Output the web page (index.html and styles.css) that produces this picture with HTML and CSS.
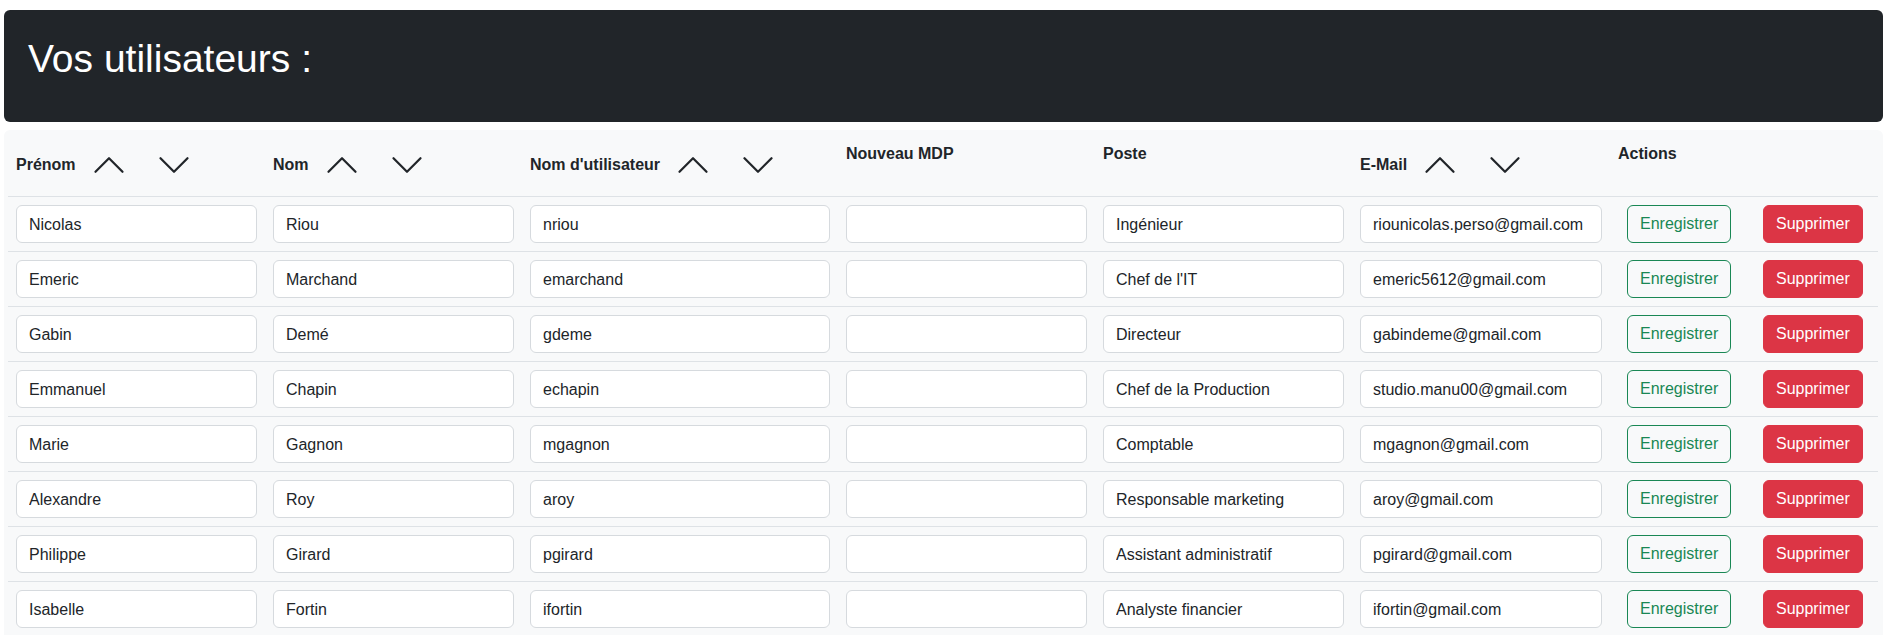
FILE: index.html
```html
<!DOCTYPE html>
<html lang="fr">
<head>
<meta charset="utf-8">
<title>Vos utilisateurs</title>
<link rel="stylesheet" href="styles.css">
</head>
<body>
<div class="page">
  <header class="banner">
    <h1 class="banner-title">Vos utilisateurs :</h1>
  </header>

  <div class="panel">
    <table class="users">
      <colgroup>
        <col class="c-first"><col class="c-last"><col class="c-user"><col class="c-pass"><col class="c-job"><col class="c-mail"><col class="c-save"><col class="c-del">
      </colgroup>
      <thead>
        <tr>
          <th><div class="sort"><span class="label">Prénom</span><button class="sort-btn" type="button"><svg viewBox="0 0 16 16" class="chev"><path d="M7.646 4.646a.5.5 0 0 1 .708 0l6 6a.5.5 0 0 1-.708.708L8 5.707l-5.646 5.647a.5.5 0 0 1-.708-.708l6-6z"/></svg></button><button class="sort-btn" type="button"><svg viewBox="0 0 16 16" class="chev"><path d="M1.646 4.646a.5.5 0 0 1 .708 0L8 10.293l5.646-5.647a.5.5 0 0 1 .708.708l-6 6a.5.5 0 0 1-.708 0l-6-6a.5.5 0 0 1 0-.708z"/></svg></button></div></th>
          <th><div class="sort"><span class="label">Nom</span><button class="sort-btn" type="button"><svg viewBox="0 0 16 16" class="chev"><path d="M7.646 4.646a.5.5 0 0 1 .708 0l6 6a.5.5 0 0 1-.708.708L8 5.707l-5.646 5.647a.5.5 0 0 1-.708-.708l6-6z"/></svg></button><button class="sort-btn" type="button"><svg viewBox="0 0 16 16" class="chev"><path d="M1.646 4.646a.5.5 0 0 1 .708 0L8 10.293l5.646-5.647a.5.5 0 0 1 .708.708l-6 6a.5.5 0 0 1-.708 0l-6-6a.5.5 0 0 1 0-.708z"/></svg></button></div></th>
          <th><div class="sort"><span class="label">Nom d'utilisateur</span><button class="sort-btn" type="button"><svg viewBox="0 0 16 16" class="chev"><path d="M7.646 4.646a.5.5 0 0 1 .708 0l6 6a.5.5 0 0 1-.708.708L8 5.707l-5.646 5.647a.5.5 0 0 1-.708-.708l6-6z"/></svg></button><button class="sort-btn" type="button"><svg viewBox="0 0 16 16" class="chev"><path d="M1.646 4.646a.5.5 0 0 1 .708 0L8 10.293l5.646-5.647a.5.5 0 0 1 .708.708l-6 6a.5.5 0 0 1-.708 0l-6-6a.5.5 0 0 1 0-.708z"/></svg></button></div></th>
          <th>Nouveau MDP</th>
          <th>Poste</th>
          <th><div class="sort"><span class="label">E-Mail</span><button class="sort-btn" type="button"><svg viewBox="0 0 16 16" class="chev"><path d="M7.646 4.646a.5.5 0 0 1 .708 0l6 6a.5.5 0 0 1-.708.708L8 5.707l-5.646 5.647a.5.5 0 0 1-.708-.708l6-6z"/></svg></button><button class="sort-btn" type="button"><svg viewBox="0 0 16 16" class="chev"><path d="M1.646 4.646a.5.5 0 0 1 .708 0L8 10.293l5.646-5.647a.5.5 0 0 1 .708.708l-6 6a.5.5 0 0 1-.708 0l-6-6a.5.5 0 0 1 0-.708z"/></svg></button></div></th>
          <th colspan="2">Actions</th>
        </tr>
      </thead>
      <tbody>
        <tr>
          <td><input class="field" type="text" value="Nicolas"></td>
          <td><input class="field" type="text" value="Riou"></td>
          <td><input class="field" type="text" value="nriou"></td>
          <td><input class="field" type="password" value=""></td>
          <td><input class="field" type="text" value="Ingénieur"></td>
          <td><input class="field" type="text" value="riounicolas.perso@gmail.com"></td>
          <td><button class="btn btn-save" type="button">Enregistrer</button></td>
          <td><button class="btn btn-del" type="button">Supprimer</button></td>
        </tr>
        <tr>
          <td><input class="field" type="text" value="Emeric"></td>
          <td><input class="field" type="text" value="Marchand"></td>
          <td><input class="field" type="text" value="emarchand"></td>
          <td><input class="field" type="password" value=""></td>
          <td><input class="field" type="text" value="Chef de l'IT"></td>
          <td><input class="field" type="text" value="emeric5612@gmail.com"></td>
          <td><button class="btn btn-save" type="button">Enregistrer</button></td>
          <td><button class="btn btn-del" type="button">Supprimer</button></td>
        </tr>
        <tr>
          <td><input class="field" type="text" value="Gabin"></td>
          <td><input class="field" type="text" value="Demé"></td>
          <td><input class="field" type="text" value="gdeme"></td>
          <td><input class="field" type="password" value=""></td>
          <td><input class="field" type="text" value="Directeur"></td>
          <td><input class="field" type="text" value="gabindeme@gmail.com"></td>
          <td><button class="btn btn-save" type="button">Enregistrer</button></td>
          <td><button class="btn btn-del" type="button">Supprimer</button></td>
        </tr>
        <tr>
          <td><input class="field" type="text" value="Emmanuel"></td>
          <td><input class="field" type="text" value="Chapin"></td>
          <td><input class="field" type="text" value="echapin"></td>
          <td><input class="field" type="password" value=""></td>
          <td><input class="field" type="text" value="Chef de la Production"></td>
          <td><input class="field" type="text" value="studio.manu00@gmail.com"></td>
          <td><button class="btn btn-save" type="button">Enregistrer</button></td>
          <td><button class="btn btn-del" type="button">Supprimer</button></td>
        </tr>
        <tr>
          <td><input class="field" type="text" value="Marie"></td>
          <td><input class="field" type="text" value="Gagnon"></td>
          <td><input class="field" type="text" value="mgagnon"></td>
          <td><input class="field" type="password" value=""></td>
          <td><input class="field" type="text" value="Comptable"></td>
          <td><input class="field" type="text" value="mgagnon@gmail.com"></td>
          <td><button class="btn btn-save" type="button">Enregistrer</button></td>
          <td><button class="btn btn-del" type="button">Supprimer</button></td>
        </tr>
        <tr>
          <td><input class="field" type="text" value="Alexandre"></td>
          <td><input class="field" type="text" value="Roy"></td>
          <td><input class="field" type="text" value="aroy"></td>
          <td><input class="field" type="password" value=""></td>
          <td><input class="field" type="text" value="Responsable marketing"></td>
          <td><input class="field" type="text" value="aroy@gmail.com"></td>
          <td><button class="btn btn-save" type="button">Enregistrer</button></td>
          <td><button class="btn btn-del" type="button">Supprimer</button></td>
        </tr>
        <tr>
          <td><input class="field" type="text" value="Philippe"></td>
          <td><input class="field" type="text" value="Girard"></td>
          <td><input class="field" type="text" value="pgirard"></td>
          <td><input class="field" type="password" value=""></td>
          <td><input class="field" type="text" value="Assistant administratif"></td>
          <td><input class="field" type="text" value="pgirard@gmail.com"></td>
          <td><button class="btn btn-save" type="button">Enregistrer</button></td>
          <td><button class="btn btn-del" type="button">Supprimer</button></td>
        </tr>
        <tr>
          <td><input class="field" type="text" value="Isabelle"></td>
          <td><input class="field" type="text" value="Fortin"></td>
          <td><input class="field" type="text" value="ifortin"></td>
          <td><input class="field" type="password" value=""></td>
          <td><input class="field" type="text" value="Analyste financier"></td>
          <td><input class="field" type="text" value="ifortin@gmail.com"></td>
          <td><button class="btn btn-save" type="button">Enregistrer</button></td>
          <td><button class="btn btn-del" type="button">Supprimer</button></td>
        </tr>
      </tbody>
    </table>
  </div>
</div>
</body>
</html>
```

FILE: styles.css
```css
html {
  overflow: hidden;
}

body {
  margin: 0;
  background: #ffffff;
  color: #212529;
  font-family: "Liberation Sans", Arial, sans-serif;
  font-size: 16px;
  line-height: 24px;
}

.page {
  padding: 10px 7px 0 4px;
}

.banner {
  background: #212529;
  border-radius: 6px;
  height: 112px;
  padding: 0 24px;
  box-sizing: border-box;
}

.banner-title {
  margin: 0;
  padding-top: 25px;
  color: #ffffff;
  font-size: 39px;
  line-height: 48px;
  font-weight: 400;
}

.panel {
  margin-top: 8px;
  background: #f8f9fa;
  border-radius: 6px;
  padding: 4px;
}

.users {
  width: 1870px;
  table-layout: fixed;
  border-collapse: collapse;
}

.c-first { width: 257px; }
.c-last { width: 257px; }
.c-user { width: 316px; }
.c-pass { width: 257px; }
.c-job { width: 257px; }
.c-mail { width: 258px; }
.c-save { width: 136px; }
.c-del { width: 132px; }

.users th,
.users td {
  padding: 8px;
  border-bottom: 1px solid #dee2e6;
  text-align: left;
}

.users th {
  vertical-align: top;
  font-weight: 700;
  white-space: nowrap;
}

.users td {
  vertical-align: middle;
}

.sort {
  display: flex;
  align-items: center;
}

.label {
  display: block;
}

.sort-btn {
  display: block;
  margin: 0 0 0 1px;
  padding: 5px 14px;
  border: 0;
  background: transparent;
  color: #212529;
}

.chev {
  display: block;
  width: 36px;
  height: 36px;
  fill: currentColor;
}

.field {
  display: block;
  box-sizing: border-box;
  width: 100%;
  height: 38px;
  padding: 6px 12px 5px;
  border: 1px solid #d6dade;
  border-radius: 6px;
  background: #ffffff;
  color: #212529;
  font-family: "Liberation Sans", Arial, sans-serif;
  font-size: 16px;
  line-height: 24px;
}

.btn {
  display: inline-block;
  box-sizing: border-box;
  height: 38px;
  margin: 0 9px;
  padding: 6px 12px;
  border: 1px solid transparent;
  border-radius: 6px;
  font-family: "Liberation Sans", Arial, sans-serif;
  font-size: 16px;
  line-height: 24px;
}

.btn-save {
  background: transparent;
  border-color: #198754;
  color: #198754;
}

.btn-del {
  background: #dc3545;
  border-color: #dc3545;
  color: #ffffff;
}
```
